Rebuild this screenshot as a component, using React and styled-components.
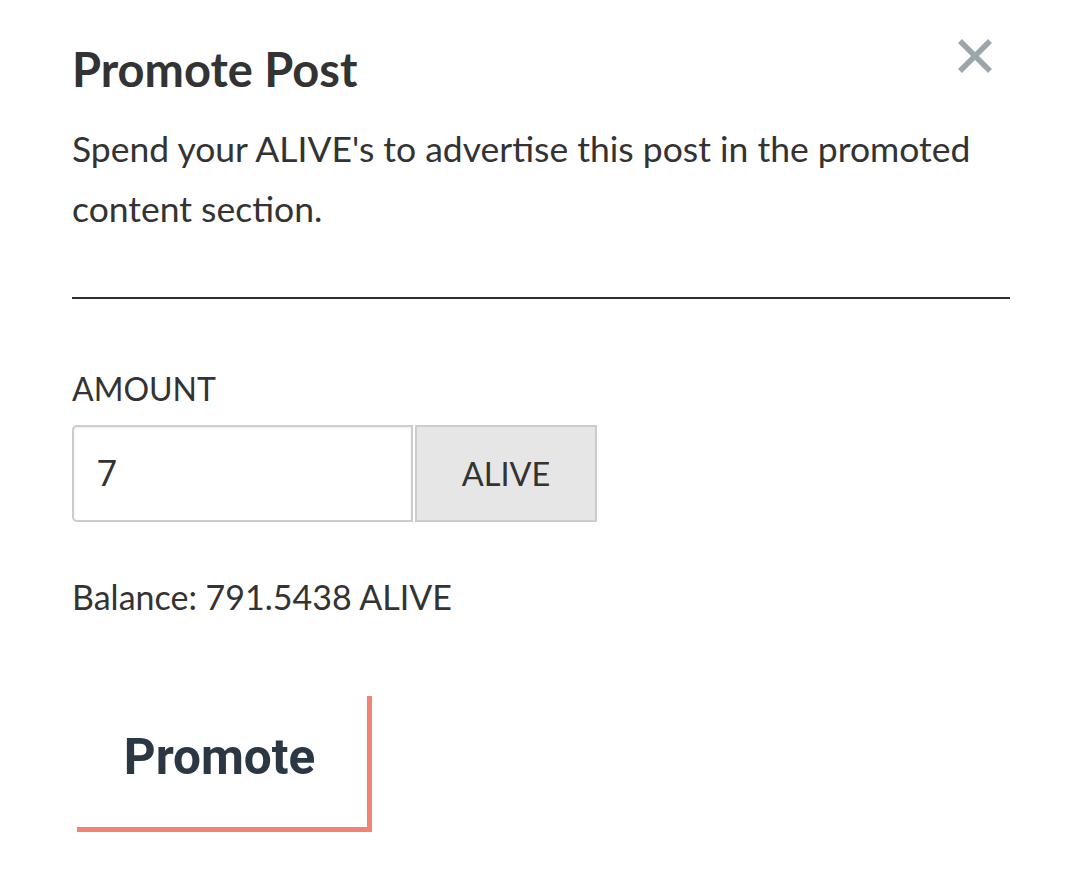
import React from "react";
import styled, { createGlobalStyle } from "styled-components";

const Global = createGlobalStyle`
  html, body { margin: 0; padding: 0; background: #fff; }
  body { font-family: Lato, "Open Sans", sans-serif; color: #333; }
  * { box-sizing: border-box; }
`;

const Dialog = styled.div`
  width: 1080px;
  padding: 37px 70px 40px 72px;
`;

const Header = styled.div`
  display: flex;
  justify-content: space-between;
  align-items: flex-start;
`;

const Title = styled.h1`
  margin: 0;
  font-size: 47px;
  line-height: 64px;
  font-weight: 700;
  color: #333;
`;

const Close = styled.button`
  border: 0;
  background: none;
  padding: 0;
  margin: 1px 17px 0 0;
  width: 36px;
  height: 36px;
  cursor: pointer;
  display: flex;
`;

const Lead = styled.p`
  margin: 18px 0 0;
  font-size: 35.5px;
  line-height: 60px;
  color: #333;
`;

const Rule = styled.hr`
  margin: 58px 0 0;
  border: 0;
  border-top: 2px solid #2a2f33;
`;

const Label = styled.div`
  margin-top: 70px;
  font-size: 32px;
  line-height: 40px;
  color: #333;
`;

const Group = styled.div`
  display: flex;
  margin-top: 16px;
  height: 97px;
`;

const Input = styled.input`
  width: 341px;
  height: 100%;
  border: 2px solid #ccc;
  border-radius: 5px 0 0 5px;
  padding: 0 0 0 23px;
  font-family: Roboto, "Liberation Sans", sans-serif;
  font-size: 36px;
  color: #333;
  background: #fff;
  box-shadow: inset 0 1px 3px rgba(0, 0, 0, 0.08);
  outline: none;
`;

const Addon = styled.div`
  width: 182px;
  height: 100%;
  display: flex;
  align-items: center;
  justify-content: center;
  background: #e6e6e6;
  border: 2px solid #ccc;
  margin-left: 2px;
  font-size: 32.5px;
  color: #333;
`;

const Balance = styled.div`
  margin-top: 55px;
  font-size: 34px;
  line-height: 40px;
  color: #333;
`;

const PromoteButton = styled.button`
  margin-top: 74px;
  width: 295px;
  height: 136px;
  border: 0;
  background: #fff;
  box-shadow: 5px 5px 0 #f28274;
  font-family: Roboto, "Liberation Sans", sans-serif;
  font-weight: 700;
  font-size: 49.5px;
  color: #2b3844;
  cursor: pointer;
  padding: 0 0 4px;
`;

export default function App() {
  return (
    <>
      <Global />
      <Dialog>
        <Header>
          <Title>Promote Post</Title>
          <Close aria-label="Close">
            <svg width="36" height="36" viewBox="0 0 36 36">
              <path d="M3 3 L33 33 M33 3 L3 33" stroke="#9aa6ac" strokeWidth="5.5" />
            </svg>
          </Close>
        </Header>
        <Lead>Spend your ALIVE's to advertise this post in the promoted content section.</Lead>
        <Rule />
        <Label>AMOUNT</Label>
        <Group>
          <Input defaultValue="7" />
          <Addon>ALIVE</Addon>
        </Group>
        <Balance>Balance: 791.5438 ALIVE</Balance>
        <PromoteButton>Promote</PromoteButton>
      </Dialog>
    </>
  );
}
